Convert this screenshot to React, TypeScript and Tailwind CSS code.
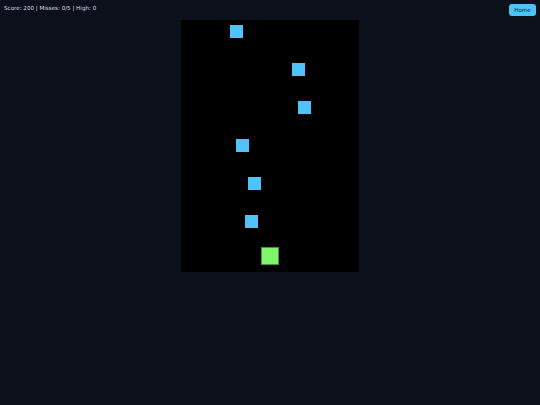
import React from 'react'

// falling blocks: offsets inside the board (left, top)
const BLOCKS: [number, number][] = [
  [49, 5],
  [111, 43],
  [117, 81],
  [55, 119],
  [67, 157],
  [64, 195],
]

export default function App() {
  return (
    <div
      className="w-[540px] h-[405px] bg-[#0b101a] overflow-hidden"
      style={{ fontFamily: '"DejaVu Sans", sans-serif' }}
    >
      {/* Header */}
      <div className="h-5 flex items-start justify-between pl-1 pr-1">
        <p className="pt-[4px] text-[5.6px] leading-[8px] text-[#d7dce4]">
          Score: 200 | Misses: 0/5 | High: 0
        </p>
        <button className="mt-[4px] w-[27px] h-[12px] rounded-[3px] bg-[#4fc3f7] text-[#0b1a2a] text-[5.6px] leading-[12px] text-center">
          Home
        </button>
      </div>

      {/* Board */}
      <div className="relative mx-auto w-[178px] h-[252px] bg-black">
        {BLOCKS.map(([x, y], i) => (
          <div
            key={i}
            className="absolute w-[13px] h-[13px] bg-[#4fc3f7]"
            style={{ left: x, top: y }}
          />
        ))}
        <div className="absolute left-[80px] top-[227px] w-[18px] h-[18px] bg-[#80f76a] border border-[#4f8f45]" />
      </div>
    </div>
  )
}
